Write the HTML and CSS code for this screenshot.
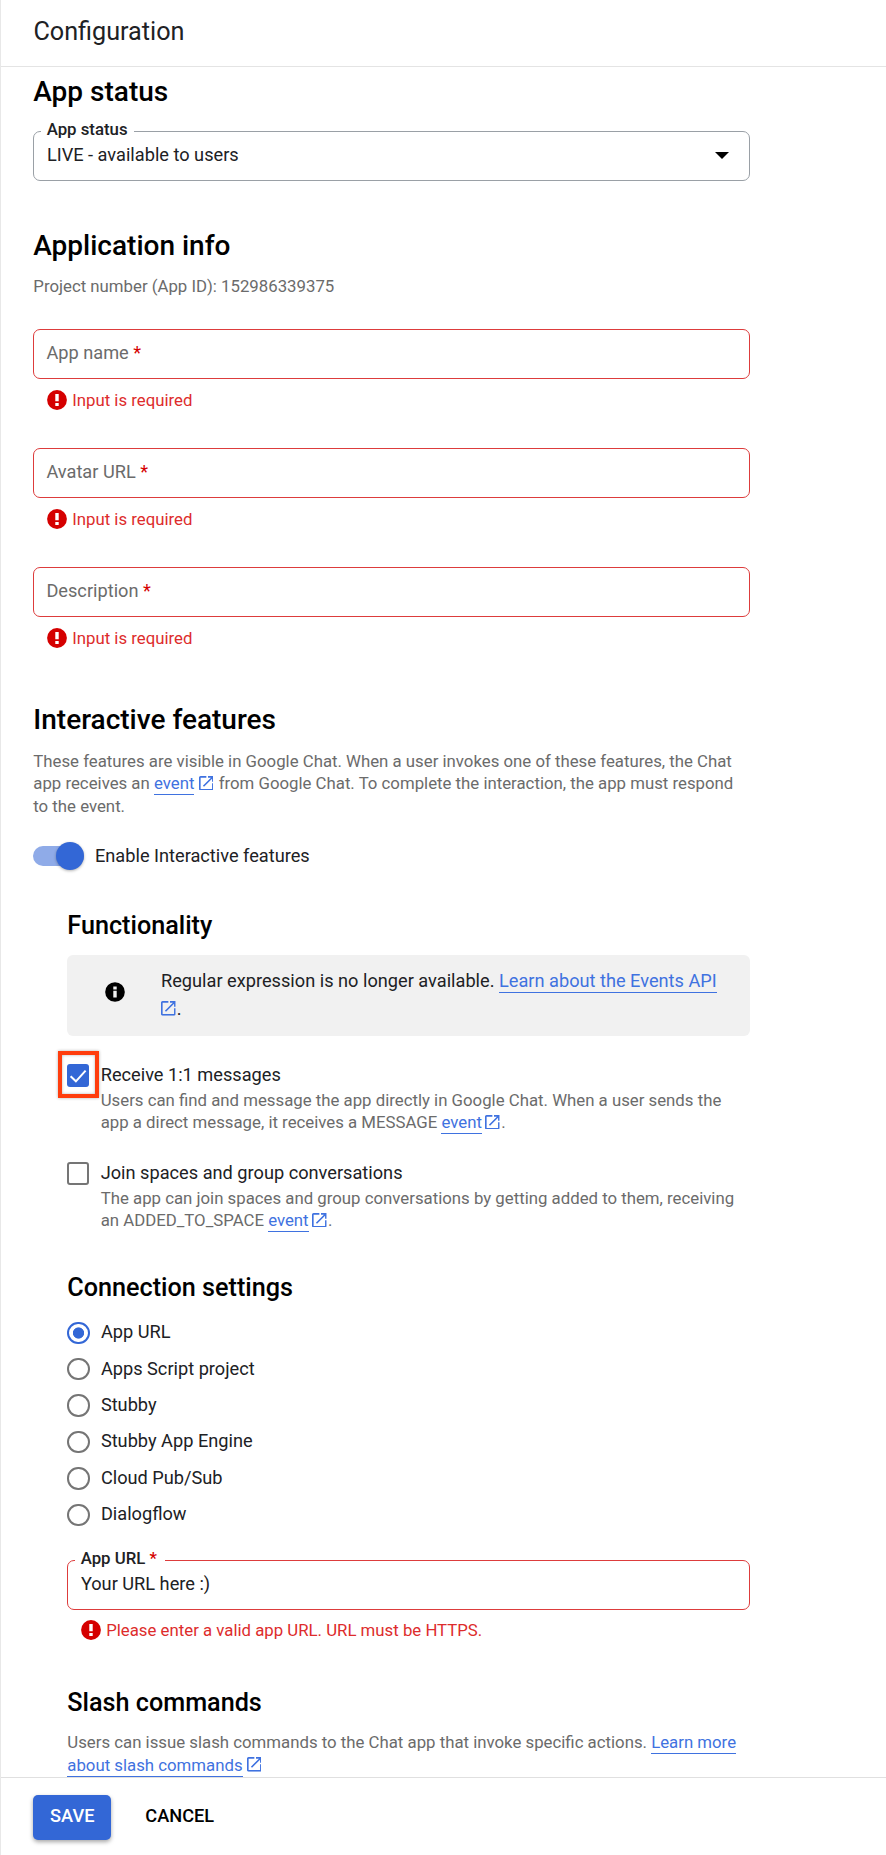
FILE: index.html
```html
<!DOCTYPE html>
<html lang="en">
<head>
<meta charset="utf-8">
<title>Configuration</title>
<link rel="stylesheet" href="styles.css">
</head>
<body>
<svg class="defs" aria-hidden="true">
  <symbol id="ext" viewBox="3 3 18 18"><path d="M19 19H5V5h7V3H5c-1.11 0-2 .9-2 2v14c0 1.1.89 2 2 2h14c1.1 0 2-.9 2-2v-7h-2v7zM14 3v2h3.59l-9.83 9.83 1.41 1.41L19 6.41V10h2V3h-7z"/></symbol>
  <symbol id="err" viewBox="0 0 20 20"><circle cx="10" cy="10" r="9.9"/><path fill="#fff" d="M8.3 3.9h3.4v7.4H8.3zM8.3 13h3.4v3H8.3z"/></symbol>
</svg>
<header class="header"><h1>Configuration</h1></header>
<main class="main">
  <section class="section">
    <h2>App status</h2>
    <div class="field select">
      <span class="legend">App status</span>
      <span class="value">LIVE - available to users</span>
      <span class="caret"></span>
    </div>
  </section>
  <section class="section info">
    <h2>Application info</h2>
    <p class="text project">Project number (App ID): 152986339375</p>
    <div class="field invalid"><span class="placeholder">App name <b>*</b></span></div>
    <p class="error"><svg><use href="#err"/></svg>Input is required</p>
    <div class="field invalid"><span class="placeholder">Avatar URL <b>*</b></span></div>
    <p class="error"><svg><use href="#err"/></svg>Input is required</p>
    <div class="field invalid"><span class="placeholder">Description <b>*</b></span></div>
    <p class="error"><svg><use href="#err"/></svg>Input is required</p>
  </section>
  <section class="section interactive">
    <h2>Interactive features</h2>
    <p class="text">These features are visible in Google Chat. When a user invokes one of these features, the Chat<br>app receives an <a>event</a><svg class="ext"><use href="#ext"/></svg> from Google Chat. To complete the interaction, the app must respond<br>to the event.</p>
    <div class="toggle"><span class="switch"><span class="thumb"></span></span>Enable Interactive features</div>
  </section>
  <section class="section nested">
    <h3>Functionality</h3>
    <div class="notice">
      <svg class="notice-icon" viewBox="0 0 20 20"><circle cx="10" cy="10" r="9.8"/><path fill="#f1f1f1" d="M8.3 4.6h3.4v2.8H8.3zM8.3 8.8h3.4v6.8H8.3z"/></svg>
      <p>Regular expression is no longer available. <a>Learn about the Events API</a><br><svg class="ext"><use href="#ext"/></svg>.</p>
    </div>
    <div class="option">
      <span class="checkbox checked"><svg viewBox="0 0 22 23"><path d="M3.6 12.2l5.3 5.1L18.6 6.6"/></svg><span class="highlight"></span></span>
      <div>
        <p class="label">Receive 1:1 messages</p>
        <p class="text">Users can find and message the app directly in Google Chat. When a user sends the<br>app a direct message, it receives a MESSAGE <a>event</a><svg class="ext"><use href="#ext"/></svg>.</p>
      </div>
    </div>
    <div class="option">
      <span class="checkbox"></span>
      <div>
        <p class="label">Join spaces and group conversations</p>
        <p class="text">The app can join spaces and group conversations by getting added to them, receiving<br>an ADDED_TO_SPACE <a>event</a><svg class="ext"><use href="#ext"/></svg>.</p>
      </div>
    </div>
    <h3 class="connection">Connection settings</h3>
    <div class="radios">
      <div class="radio on"><i></i><span>App URL</span></div>
      <div class="radio"><i></i><span>Apps Script project</span></div>
      <div class="radio"><i></i><span>Stubby</span></div>
      <div class="radio"><i></i><span>Stubby App Engine</span></div>
      <div class="radio"><i></i><span>Cloud Pub/Sub</span></div>
      <div class="radio"><i></i><span>Dialogflow</span></div>
    </div>
    <div class="field invalid url">
      <span class="legend">App URL <b>*</b></span>
      <span class="value">Your URL here :)</span>
    </div>
    <p class="error"><svg><use href="#err"/></svg>Please enter a valid app URL. URL must be HTTPS.</p>
    <h3 class="slash">Slash commands</h3>
    <p class="text slash-text">Users can issue slash commands to the Chat app that invoke specific actions. <a>Learn more</a><br><a>about slash commands</a><svg class="ext"><use href="#ext"/></svg></p>
  </section>
</main>
<footer class="footer">
  <button class="save">SAVE</button>
  <button class="cancel">CANCEL</button>
</footer>
</body>
</html>
```
FILE: styles.css
```css
* { box-sizing: border-box; }
body {
  margin: 0;
  height: 1855px;
  display: flex;
  flex-direction: column;
  border-left: 1px solid #e8e8e8;
  background: #fff;
  color: #202124;
  font: 18.2px/24px Roboto, sans-serif;
  overflow: hidden;
}
h1, h2, h3, p { margin: 0; }
b { color: #d50000; font-weight: 400; }
.defs { position: absolute; width: 0; height: 0; }

.header { flex: none; height: 67px; padding: 11px 0 0 32.4px; border-bottom: 1px solid #e4e4e4; }
h1 { font-size: 25.2px; line-height: 42px; font-weight: 400; }
h2 { font-size: 28px; line-height: 34px; font-weight: 500; color: #000; }
h3 { font-size: 25.2px; line-height: 30px; font-weight: 500; color: #000; }

.main { flex: 1; min-height: 0; overflow: hidden; padding: 8px 0 0 32.3px; }
.section { width: 717px; }
.info { margin-top: 48px; }
.interactive { margin-top: 55px; }
.nested { margin-top: 41px; padding-left: 34px; }

.text { font-size: 16.8px; line-height: 22.4px; color: #6b6b6b; white-space: nowrap; }
.project { margin: 12px 0 31.6px; }
.interactive .text { margin-top: 13px; }

a { color: #3f72e0; border-bottom: 1px solid #3f72e0; padding-bottom: 1px; }
.ext { width: 14.7px; height: 14.7px; margin: 0 1.2px 0 4.2px; fill: #3f72e0; vertical-align: -1px; }

.field {
  position: relative;
  display: flex;
  align-items: flex-start;
  justify-content: space-between;
  height: 50px;
  padding: 11px 20px 0 12.6px;
  border: 1px solid #9aa0a6;
  border-radius: 7px;
}
.select { margin-top: 22px; }
.field.invalid { border-color: #dd3c3c; }
.legend {
  position: absolute;
  left: 6.4px;
  top: -13px;
  padding: 0 6px;
  background: #fff;
  font-size: 16.8px;
  line-height: 20px;
  font-weight: 500;
}
.legend b { font-weight: 500; padding-right: 2px; }
.placeholder { color: #6b6b6b; margin-left: -.5px; }
.caret { margin-top: 9px; border: 7px solid transparent; border-top-color: #000; border-bottom: 0; }

.error {
  display: flex;
  align-items: center;
  gap: 5.2px;
  margin: 11px 0 38px;
  padding-left: 13.7px;
  font-size: 16.8px;
  line-height: 20px;
  color: #dd2c2c;
}
.error svg { width: 20px; height: 20px; fill: #d50000; }
.error:last-child { margin-bottom: 0; }

.toggle { display: flex; align-items: center; gap: 11.2px; height: 28px; line-height: 28px; margin-top: 25px; }
.switch { display: flex; align-items: center; justify-content: flex-end; width: 50.5px; height: 20px; border-radius: 10px; background: #8fabe8; }
.thumb { width: 28px; height: 28px; border-radius: 50%; background: #3367d6; box-shadow: 0 1px 3px rgba(0, 0, 0, .3); }

.notice {
  display: flex;
  align-items: center;
  height: 81px;
  margin: 14px 0 27px;
  padding-left: 37.7px;
  border-radius: 6px;
  background: #f1f1f1;
  line-height: 28px;
}
.notice-icon { flex: none; width: 20px; height: 20px; margin: -8px 36px 0 0; }
.notice p { white-space: nowrap; margin-top: -2px; }
.notice .ext { margin-left: 0; }

.option { display: flex; gap: 11.4px; margin-bottom: 27.2px; }
.option .text { margin-top: 2px; padding-bottom: .8px; line-height: 22px; }
.option .ext { margin-left: 3.5px; }
.checkbox { position: relative; flex: none; width: 22px; height: 23px; margin-top: 1px; border: 2px solid #757575; border-radius: 3px; }
.checkbox.checked { border: 0; background: #3367d6; }
.checkbox svg { display: block; width: 22px; height: 23px; fill: none; stroke: #fff; stroke-width: 2; }
.highlight { position: absolute; left: -9.3px; top: -13px; width: 41px; height: 47px; border: 4px solid #ff3d0d; box-shadow: 0 0 3px rgba(0, 0, 0, .3), inset 0 0 3px rgba(0, 0, 0, .3); }

.connection { margin-top: 41px; }
.radios { margin: 11.6px 0 27px; }
.radio { display: flex; align-items: center; gap: 11.2px; height: 36.4px; }
.radio i { display: flex; width: 22.4px; height: 22.4px; border: 2px solid #757575; border-radius: 50%; }
.radio span { padding-bottom: 1.2px; }
.radio.on i { border-color: #3367d6; background: radial-gradient(circle, #3367d6 5.2px, #fff 6px); }

.url + .error { margin: 10.5px 0 48px; }
.slash-text { margin-top: 13px; }

.footer { flex: none; display: flex; align-items: flex-start; gap: 34px; height: 78px; padding: 17px 0 0 32.3px; border-top: 1px solid #e0e0e0; background: #fff; }
button { border: 0; padding: 0; background: none; font: 500 18.2px/42px Roboto, sans-serif; color: #000; }
.save { width: 78px; height: 45px; padding-bottom: 3px; border-radius: 5px; background: #3367d6; color: #fff; box-shadow: 0 2px 4px rgba(0, 0, 0, .35); }
```
